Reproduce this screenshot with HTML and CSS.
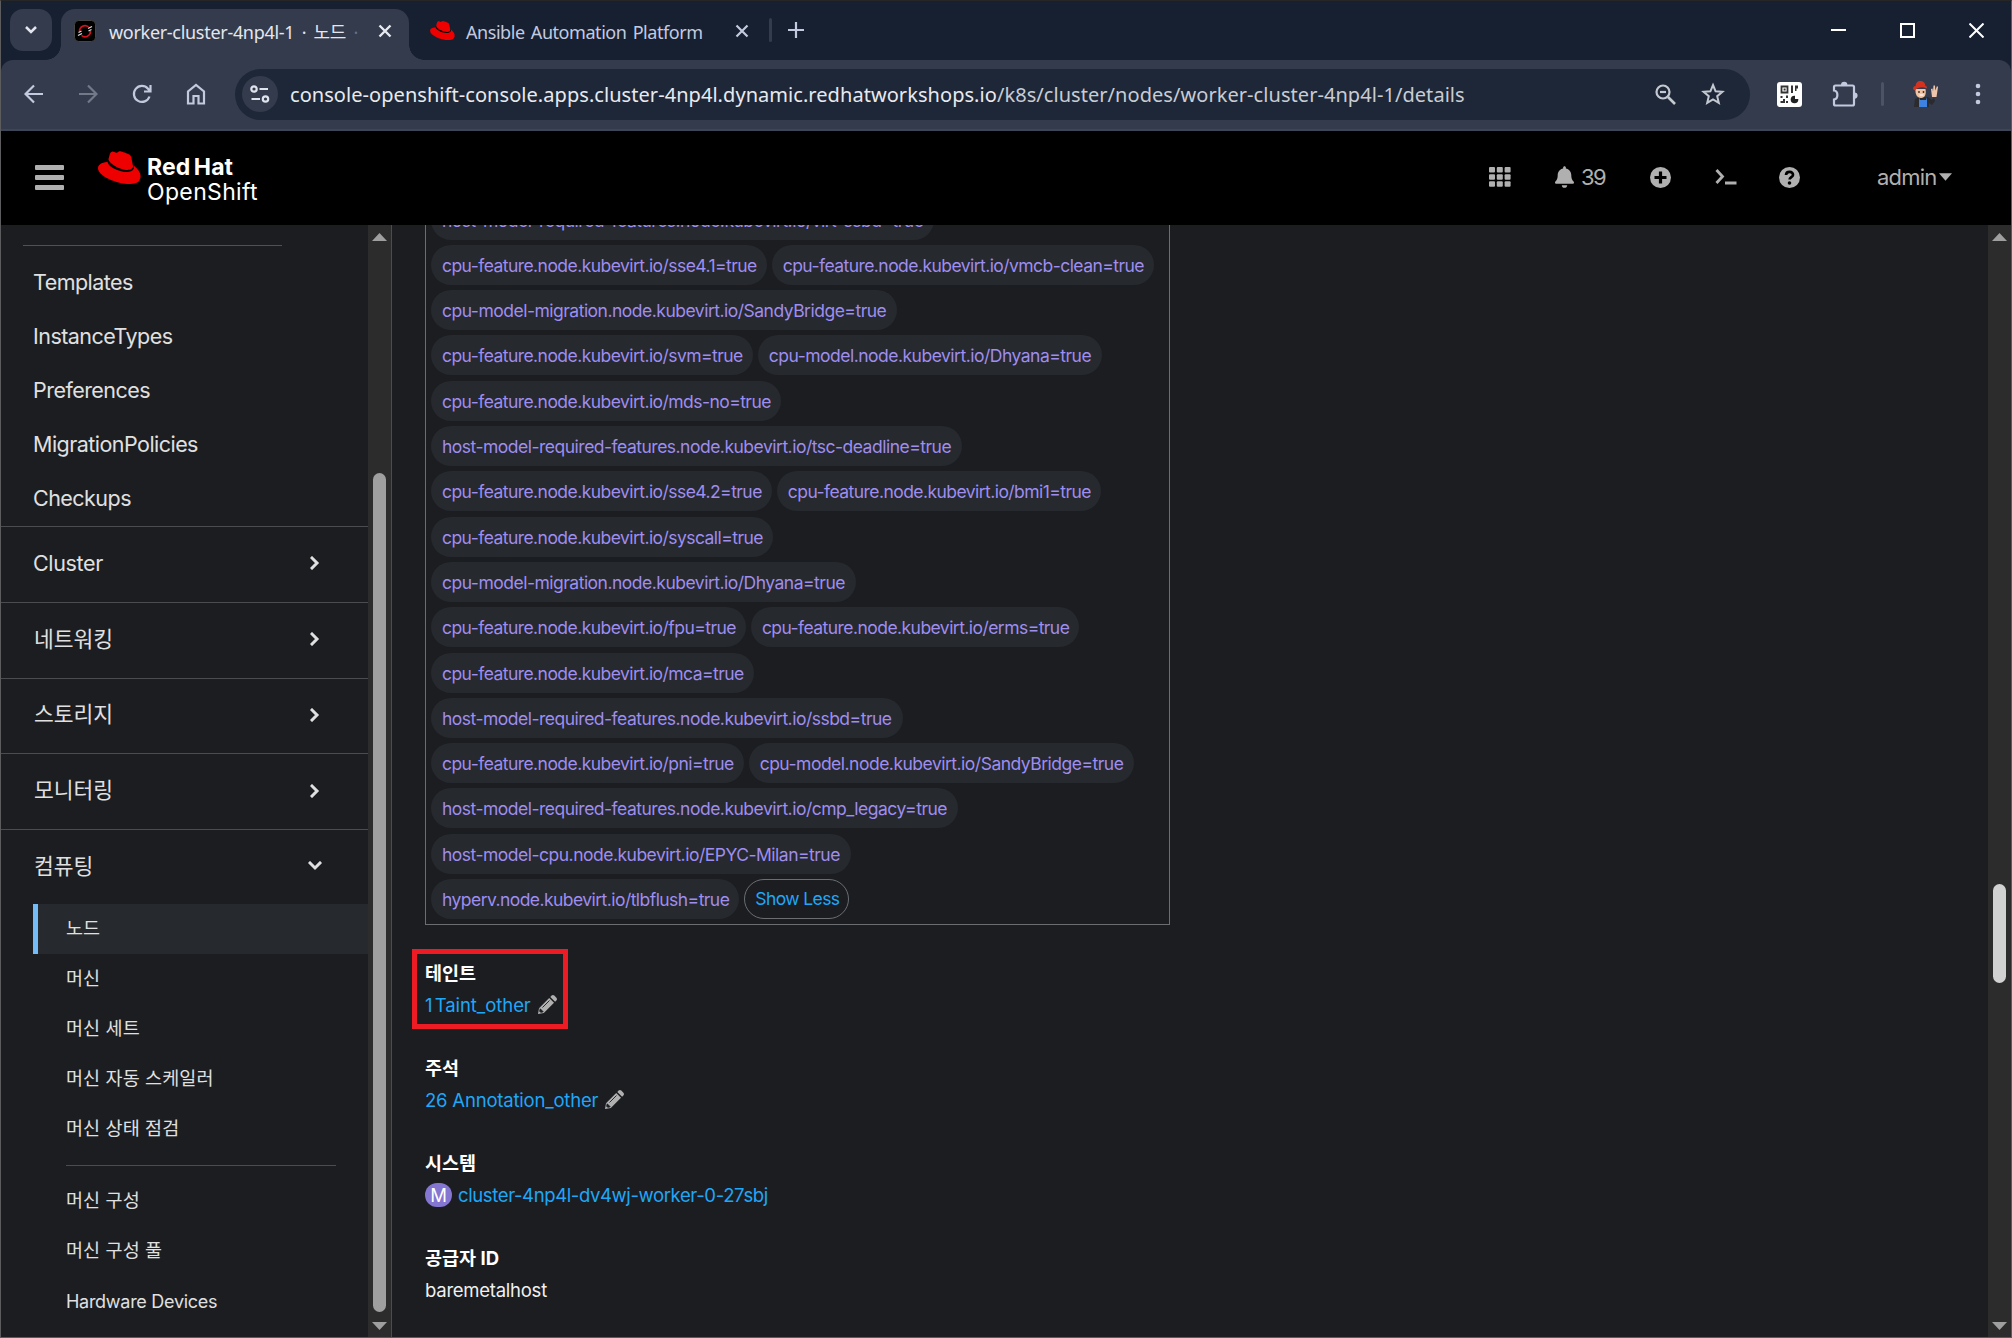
FILE: index.html
```html
<!DOCTYPE html>
<html lang="ko">
<head>
<meta charset="utf-8">
<title>worker-cluster-4np4l-1 · 노드</title>
<link rel="stylesheet" href="styles.css">
</head>
<body>
<svg class="defs" width="0" height="0" aria-hidden="true">
  <symbol id="hat" viewBox="0 0 43 33">
    <path fill="#e00" d="M28.3 18.6c2.8 0 6.8-.6 6.8-3.9 0-.3 0-.5-.1-.8L33.300 5.500c-.4-1.600-.7-2.300-3.500-3.700C27.600.7 23-.8 21.600-.8c-1.300 0-1.600 1.600-3.100 1.600-1.500 0-2.500-1.200-3.900-1.200-1.300 0-2.100.9-2.800 2.700l-2.200 8c0 3 10.500 8.300 18.700 8.300z" transform="translate(0 1)"/>
    <path fill="#e00" d="M35.600 14.500c.3 1.400.3 1.500.3 1.700 0 2.400-2.700 3.700-6.200 3.700-8 0-15-4.700-15-7.800 0-.4.100-.9.300-1.200l-4.300.1C6 11.200 0 12.300 0 17.200 0 25 18.600 33 32 33c7.600 0 10.600-3.600 10.600-8 0-3.600-3-7.500-7-10.500z"/>
    <path fill="#000" d="M35.600 14.500c.3 1.400.3 1.500.3 1.700 0 2.900-2.700 4.700-6.800 4.700-9.400 0-19.500-5.900-19.500-9.900 0-.7.200-1.500.6-2.200l.5-1.300c-.1.400-.2.700-.2 1 0 3 10.600 10.500 19 10.500 3.400 0 5.600-1.500 5.600-3.900z"/>
  </symbol>
  <symbol id="right" viewBox="0 0 10 14"><path d="M2 2l5 5-5 5" fill="none" stroke="#e0e0e0" stroke-width="3" stroke-linecap="square"/></symbol>
  <symbol id="pencil" viewBox="0 0 19 19">
    <path fill="#b0b0b0" d="M0 19l1-5.800L11.200 3l4.800 4.800L5.800 18zM12.300 1.900L13.600.6c.8-.8 1.900-.8 2.700 0l2.100 2.100c.8.8.8 1.900 0 2.700l-1.300 1.300z"/>
    <path d="M2.200 13.800L5.200 16.800l-2.500.5-1-1zM4.500 12.500l7-7" fill="#1b1d21" stroke="#1b1d21" stroke-width=".9"/>
  </symbol>
</svg>

<div class="window">
  <div class="tabstrip">
    <div class="tabsearch"><svg width="14" height="10" viewBox="0 0 14 10"><path d="M2 2l5 5 5-5" fill="none" stroke="#e3e6ee" stroke-width="2.500"/></svg></div>
    <div class="tab active">
      <svg class="favicon" width="22" height="22" viewBox="0 0 22 22"><rect x=".5" y=".5" width="21" height="21" rx="4" fill="#000" stroke="#454545"/><path d="M5.500 11.500a5.500 5.500 0 0 1 9-4.500M16.500 11a5.500 5.500 0 0 1-9 4.500" fill="none" stroke="#d3131b" stroke-width="1.600"/><path d="M14 8.500l4-2M4 15.500l4-2M14.500 11l3-1.500M4.500 12.500l3-1.500" stroke="#ddd" stroke-width="1.300"/></svg>
      <span class="tabtitle">worker-cluster-4np4l-1 · 노드 <i>·</i></span>
      <svg class="close" width="14" height="14" viewBox="0 0 14 14"><path d="M1.500 1.500l11 11M12.500 1.500l-11 11" stroke="#e8eaf0" stroke-width="2.400"/></svg>
    </div>
    <div class="tab">
      <svg class="favicon hat" width="25" height="19"><use href="#hat"/></svg>
      <span class="tabtitle second">Ansible Automation Platform</span>
      <svg class="close" width="14" height="14" viewBox="0 0 14 14"><path d="M1.500 1.500l11 11M12.500 1.500l-11 11" stroke="#c3cae0" stroke-width="2.200"/></svg>
    </div>
    <div class="tabsep"></div>
    <svg class="newtab" width="16" height="16" viewBox="0 0 16 16"><path d="M8 0v16M0 8h16" stroke="#c3cae0" stroke-width="2.200"/></svg>
    <div class="winbtns">
      <svg width="15" height="15" viewBox="0 0 15 15"><path d="M0 7h15" stroke="#fff" stroke-width="2"/></svg>
      <svg width="15" height="15" viewBox="0 0 15 15"><path d="M1 1h13v13H1z" fill="none" stroke="#fff" stroke-width="2"/></svg>
      <svg width="15" height="15" viewBox="0 0 15 15"><path d="M.5.5l14 14M14.500.5l-14 14" stroke="#fff" stroke-width="2"/></svg>
    </div>
  </div>

  <div class="toolbar">
    <div class="navbtns">
      <svg width="20" height="20" viewBox="0 0 20 20"><path d="M19 10H2M10 1.500L1.500 10l8.500 8.500" fill="none" stroke="#c3cae0" stroke-width="2.200"/></svg>
      <svg width="20" height="20" viewBox="0 0 20 20"><path d="M1 10h17M10 1.500l8.500 8.500-8.500 8.500" fill="none" stroke="#727988" stroke-width="2.200"/></svg>
      <svg width="20" height="20" viewBox="0 0 20 20"><path d="M17.500 12.500A8 8 0 1 1 16 4.700L18 7M18.500 1v6.500H12" fill="none" stroke="#c3cae0" stroke-width="2.200"/></svg>
      <svg width="20" height="22" viewBox="0 0 20 22"><path d="M2 20.500V8.500l8-6.500 8 6.500v12h-5.500V13h-5v7.500z" fill="none" stroke="#c3cae0" stroke-width="2.200"/></svg>
    </div>
    <div class="omnibox">
      <div class="siteinfo"><svg width="20" height="20" viewBox="0 0 20 20" fill="none" stroke="#dfe3ec" stroke-width="2.200"><circle cx="4" cy="5" r="2.700"/><path d="M9.500 5H18M1.500 15H10"/><circle cx="15.500" cy="15" r="2.700"/></svg></div>
      <span class="url">console-openshift-console.apps.cluster-4np4l.dynamic.redhatworkshops.io<span class="path">/k8s/cluster/nodes/worker-cluster-4np4l-1/details</span></span>
      <svg class="mag" width="21" height="21" viewBox="0 0 21 21" fill="none" stroke="#c4c8d0" stroke-width="2.200"><circle cx="8" cy="8" r="6.500"/><path d="M5 8h6"/><path d="M13 13l7 7" stroke-width="2.600"/></svg>
      <svg class="star" width="24" height="24" viewBox="0 0 24 24"><path d="M12 3l2.600 6.300 6.800.5-5.200 4.400 1.600 6.600-5.800-3.500-5.800 3.500 1.600-6.600-5.200-4.400 6.800-.5z" fill="none" stroke="#c4c8d0" stroke-width="2"/></svg>
    </div>
    <svg class="qr" width="25" height="25" viewBox="0 0 25 25"><rect width="25" height="25" rx="3" fill="#fff"/><path d="M4.500 4.500h6v6h-6z" fill="none" stroke="#333" stroke-width="1.800"/><path d="M6.600 6.600h2v2h-2zM14 3.500h2V11h-2zM18 3.500h3v3h-1.500V9H18zM3.500 14h2v2h-2zM6 17h2v4H3.500v-2H6zM9 13.500h2V16H9zM9 19h2v2H9z" fill="#333"/><circle cx="17.500" cy="17.500" r="3.800" fill="#222"/><path d="M18 13v4h4v-4z" fill="#fff"/></svg>
    <svg class="puzzle" width="26" height="26" viewBox="0 0 26 26"><path d="M3.500 4.500h17A1.500 1.500 0 0 1 22 6v17a1.500 1.500 0 0 1-1.500 1.500h-17A1.500 1.500 0 0 1 2 23v-4.500c4.500-.6 4.500-8.400 0-9V6a1.500 1.500 0 0 1 1.500-1.500z" fill="none" stroke="#c3cae0" stroke-width="2.200"/><path d="M9 4a3.200 3.200 0 0 1 6.400 0zM22.500 11.500a3 3 0 0 1 0 6.200z" fill="#c3cae0"/></svg>
    <div class="barsep"></div>
    <svg class="avatar" width="26" height="28" viewBox="0 0 26 28"><path d="M1 27l1-8 5-2 8 0 4 3 2-2 1 3-3 4-3-2v4z" fill="#2b2b2e"/><path d="M6 17l1 3h6l1-3v10H6z" fill="#3d82e0"/><path d="M2.500 9h10c1 5-.5 9-4.500 9s-6-4-5.500-9z" fill="#f0c3a2"/><path d="M19 17l-1-8 1.500-.5.5 3 .5-6 1.500 0 .3 5L24 6l1 1-1.500 10z" fill="#efc6ab"/><path d="M0 9c0-2 1-3 2.500-3C3 2 5 .5 8 1c3 .3 4 2 4.500 5 1.500 0 2 1.500 1 2.500C10 6.500 5 7 1.500 10.500z" fill="#d5311f"/><circle cx="6" cy="12" r=".9" fill="#3a2a22"/><circle cx="10.500" cy="12" r=".9" fill="#3a2a22"/><path d="M6.500 15h4" stroke="#fff" stroke-width="1.200"/></svg>
    <svg class="dots" width="6" height="22" viewBox="0 0 6 22" fill="#c3cae0"><circle cx="3" cy="3" r="2.300"/><circle cx="3" cy="11" r="2.300"/><circle cx="3" cy="19" r="2.300"/></svg>
  </div>

  <header class="masthead">
    <div class="burger"><b></b><b></b><b></b></div>
    <div class="brand">
      <svg class="logohat" width="43" height="33"><use href="#hat"/></svg>
      <div class="brandtext"><strong>Red Hat</strong><span>OpenShift</span></div>
    </div>
    <div class="tools">
      <svg class="apps" width="22" height="20" viewBox="0 0 22 20" fill="#b0b0b0"><rect width="6" height="5.500" rx="1"/><rect x="7.800" width="6" height="5.500" rx="1"/><rect x="15.600" width="6" height="5.500" rx="1"/><rect y="7.200" width="6" height="5.500" rx="1"/><rect x="7.800" y="7.200" width="6" height="5.500" rx="1"/><rect x="15.600" y="7.200" width="6" height="5.500" rx="1"/><rect y="14.300" width="6" height="5.500" rx="1"/><rect x="7.800" y="14.300" width="6" height="5.500" rx="1"/><rect x="15.600" y="14.300" width="6" height="5.500" rx="1"/></svg>
      <svg class="bell" width="19" height="22" viewBox="0 0 448 512"><path fill="#b0b0b0" d="M224 512c35.320 0 63.970-28.650 63.970-64H160.030c0 35.350 28.650 64 63.970 64zm215.390-149.710c-19.320-20.760-55.470-51.990-55.470-154.290 0-77.700-54.480-139.900-127.940-155.160V32c0-17.670-14.320-32-31.980-32s-31.980 14.330-31.980 32v20.840C118.560 68.100 64.080 130.300 64.080 208c0 102.300-36.150 133.530-55.470 154.290-6 6.450-8.660 14.160-8.610 21.710.11 16.400 12.980 32 32.100 32h383.800c19.120 0 32-15.600 32.100-32 .05-7.550-2.610-15.270-8.610-21.710z"/></svg>
      <span class="count">39</span>
      <svg class="plus" width="21" height="21" viewBox="0 0 21 21"><circle cx="10.500" cy="10.500" r="10.500" fill="#b0b0b0"/><path d="M10.500 4.500v12M4.500 10.500h12" stroke="#000" stroke-width="3.200"/></svg>
      <svg class="term" width="22" height="16" viewBox="0 0 22 16"><path d="M1.500 1l6 6.500-6 6.500M10 14h11.500" fill="none" stroke="#b0b0b0" stroke-width="2.800"/></svg>
      <svg class="help" width="21" height="21" viewBox="0 0 21 21"><circle cx="10.500" cy="10.500" r="10.500" fill="#b0b0b0"/><path d="M7 8c.3-4.500 7.300-4 7 0-.2 2.300-3.400 2.200-3.400 4.600" fill="none" stroke="#000" stroke-width="2.700"/><circle cx="10.500" cy="16" r="1.800" fill="#000"/></svg>
      <span class="user">admin</span>
      <svg class="caret" width="13" height="8" viewBox="0 0 12 7"><path d="M0 0h12L6 7z" fill="#b0b0b0"/></svg>
    </div>
  </header>

  <div class="app">
    <nav class="sidebar">
      <hr class="rule">
      <ul class="toplist"><li>Templates</li><li>InstanceTypes</li><li>Preferences</li><li>MigrationPolicies</li><li>Checkups</li></ul>
      <div class="section latin"><span>Cluster</span><svg width="10" height="14"><use href="#right"/></svg></div>
      <div class="section"><span>네트워킹</span><svg width="10" height="14"><use href="#right"/></svg></div>
      <div class="section"><span>스토리지</span><svg width="10" height="14"><use href="#right"/></svg></div>
      <div class="section"><span>모니터링</span><svg width="10" height="14"><use href="#right"/></svg></div>
      <div class="section open"><span>컴퓨팅</span><svg class="down" width="10" height="14"><use href="#right"/></svg></div>
      <ul class="sublist">
        <li class="current">노드</li><li>머신</li><li>머신 세트</li><li>머신 자동 스케일러</li><li>머신 상태 점검</li>
      </ul>
      <hr class="subrule">
      <ul class="sublist"><li>머신 구성</li><li>머신 구성 풀</li><li class="latin">Hardware Devices</li></ul>
    </nav>
    <div class="scrollbar side"><i class="up"></i><b></b><i class="dn"></i></div>
    <main class="content">
      <div class="labels">
        <div class="row"><span>host-model-required-features.node.kubevirt.io/virt-ssbd=true</span></div>
        <div class="row"><span class="feature">cpu-feature.node.kubevirt.io/sse4.1=true</span><span class="feature">cpu-feature.node.kubevirt.io/vmcb-clean=true</span></div>
        <div class="row"><span>cpu-model-migration.node.kubevirt.io/SandyBridge=true</span></div>
        <div class="row"><span class="feature">cpu-feature.node.kubevirt.io/svm=true</span><span>cpu-model.node.kubevirt.io/Dhyana=true</span></div>
        <div class="row"><span class="feature">cpu-feature.node.kubevirt.io/mds-no=true</span></div>
        <div class="row"><span>host-model-required-features.node.kubevirt.io/tsc-deadline=true</span></div>
        <div class="row"><span class="feature">cpu-feature.node.kubevirt.io/sse4.2=true</span><span class="feature">cpu-feature.node.kubevirt.io/bmi1=true</span></div>
        <div class="row"><span class="feature">cpu-feature.node.kubevirt.io/syscall=true</span></div>
        <div class="row"><span>cpu-model-migration.node.kubevirt.io/Dhyana=true</span></div>
        <div class="row"><span class="feature">cpu-feature.node.kubevirt.io/fpu=true</span><span class="feature">cpu-feature.node.kubevirt.io/erms=true</span></div>
        <div class="row"><span class="feature">cpu-feature.node.kubevirt.io/mca=true</span></div>
        <div class="row"><span>host-model-required-features.node.kubevirt.io/ssbd=true</span></div>
        <div class="row"><span class="feature">cpu-feature.node.kubevirt.io/pni=true</span><span>cpu-model.node.kubevirt.io/SandyBridge=true</span></div>
        <div class="row"><span>host-model-required-features.node.kubevirt.io/cmp_legacy=true</span></div>
        <div class="row"><span>host-model-cpu.node.kubevirt.io/EPYC-Milan=true</span></div>
        <div class="row"><span class="feature">hyperv.node.kubevirt.io/tlbflush=true</span><button class="less">Show Less</button></div>
      </div>
      <dl class="details">
        <div class="item marked"><dt>테인트</dt><dd><a class="taint">1 Taint_other</a><svg width="19" height="19"><use href="#pencil"/></svg></dd></div>
        <div class="item"><dt>주석</dt><dd><a>26 Annotation_other</a><svg width="19" height="19"><use href="#pencil"/></svg></dd></div>
        <div class="item"><dt>시스템</dt><dd><span class="badge">M</span><a class="machine">cluster-4np4l-dv4wj-worker-0-27sbj</a></dd></div>
        <div class="item"><dt>공급자 ID</dt><dd><span class="host">baremetalhost</span></dd></div>
      </dl>
    </main>
    <div class="scrollbar page"><i class="up"></i><b></b><i class="dn"></i></div>
  </div>
</div>
</body>
</html>
```
FILE: styles.css
```css
*, *::before, *::after { box-sizing: border-box; }
body { margin: 0; background: #1b1d21; }
svg { display: block; flex: none; }
ul, dl, dd { margin: 0; padding: 0; list-style: none; }
.defs { position: absolute; }

.window {
  width: 2012px; height: 1338px; overflow: hidden;
  display: flex; flex-direction: column;
  border: 1px solid #5c5c5e; border-top-color: #262626;
  background: #1b1d21;
  font-family: Inter, "Noto Sans CJK KR", sans-serif;
  white-space: nowrap;
}

/* Browser tabs */
.tabstrip {
  height: 59px; flex: none; display: flex; align-items: flex-start;
  background: #172030; font-family: "Noto Sans", "Noto Sans CJK KR", sans-serif;
}
.tabsearch {
  width: 42px; height: 42px; margin: 8px 9px 0; border-radius: 13px;
  background: #333b4c; display: flex; align-items: center; justify-content: center;
}
.tab { height: 51px; margin-top: 8px; display: flex; align-items: center; padding: 0 0 8px 21px; }
.tab.active { position: relative; width: 348px; padding-left: 13px; background: #333b4c; border-radius: 14px 14px 0 0; }
.tab.active::before, .tab.active::after {
  content: ""; position: absolute; bottom: 0; width: 15px; height: 15px;
}
.tab.active::before { left: -15px; background: radial-gradient(circle at 0 0, transparent 14.500px, #333b4c 15px); }
.tab.active::after { right: -15px; background: radial-gradient(circle at 100% 0, transparent 14.500px, #333b4c 15px); }
.tabtitle { flex: none; width: 263px; margin-left: 13px; padding-top: 3px; font-size: 18px; line-height: 24px; letter-spacing: -.3px; word-spacing: 3px; color: #e3e6ee; }
.tabtitle i { color: #6a7180; font-style: normal; }
.tabtitle.second { width: 265px; margin-left: 11px; margin-right: 4px; color: #c3cae0; letter-spacing: -.45px; word-spacing: 2px; }
.active .close { margin-left: 6px; }
.tabsep { width: 3px; height: 24px; margin: 17px 0 0 20px; border-radius: 2px; background: #333b4c; }
.newtab { margin: 21px 0 0 16px; }
.winbtns { margin-left: auto; padding: 22px 27px 0 0; display: flex; gap: 54px; }

/* Address bar */
.toolbar {
  height: 71px; flex: none; display: flex; align-items: center;
  padding: 0 0 1px; background: #333b4c; border-bottom: 2px solid #3e4655; border-radius: 12px 12px 0 0;
  box-shadow: 0 -12px 0 0 #172030;
}
.tabstrip { position: relative; }
.navbtns { display: flex; align-items: center; gap: 34px; padding-left: 23px; }
.omnibox {
  width: 1515px; height: 51px; margin-left: 29px; border-radius: 26px; padding: 0 24px 0 7px;
  display: flex; align-items: center; background: #1e2737;
}
.siteinfo { width: 36px; height: 36px; border-radius: 50%; background: #333b4c; display: flex; align-items: center; justify-content: center; }
.url { width: 1365px; margin-left: 12px; padding-top: 1px; font: 20px/30px "Noto Sans", sans-serif; letter-spacing: .055px; color: #e8eaf0; }
.path { color: #c9ccd3; }
.mag { margin-right: 25px; }
.qr { margin-left: 27px; }
.puzzle { margin-left: 30px; }
.barsep { width: 3px; height: 24px; margin-left: 23px; border-radius: 2px; background: #4b5364; }
.avatar { margin-left: 29px; }
.dots { margin-left: 36px; }

/* Console masthead */
.masthead { height: 94px; flex: none; display: flex; align-items: center; padding-bottom: 2px; background: #000; }
.burger { width: 29px; margin-left: 34px; display: grid; gap: 5px; }
.burger b { height: 5px; border-radius: 1px; background: #b0b0b0; }
.brand { display: flex; margin-left: 34px; }
.logohat { margin-top: 1px; }
.brandtext { margin-left: 6px; padding-top: 5px; display: flex; flex-direction: column; color: #fff; font-size: 23px; line-height: 25px; }
.brandtext strong { font-weight: 700; letter-spacing: .1px; word-spacing: -2px; }
.brandtext span { letter-spacing: .35px; }
.tools { margin-left: auto; padding-right: 59px; display: flex; align-items: center; color: #b0b0b0; font-size: 22px; }
.bell { margin-left: 44px; }
.count { width: 24px; margin-left: 7px; margin-right: 1px; letter-spacing: -1.500px; }
.plus { margin-left: 44px; }
.term { margin-left: 44px; }
.help { margin-left: 42px; }
.user { width: 58px; margin-left: 77px; letter-spacing: -.8px; }
.caret { margin-left: 4px; }

/* Navigation */
.app { height: 1112px; display: flex; flex: none; }
.sidebar { width: 367px; flex: none; color: #e0e0e0; font-size: 21.500px; }
.rule { height: 1px; margin: 20px 86px 9px 22px; border: 0; background: #4f5255; }
.toplist li { height: 54px; padding-left: 32px; line-height: 54px; letter-spacing: -.54px; }
.toplist { height: 271px; }
.section {
  height: 75.750px; border-top: 1px solid #4a4c50; padding: 0 48px 2px 33px;
  display: flex; align-items: center; justify-content: space-between; font-size: 21.500px;
}
.section span { padding-bottom: 4px; }
.section.latin { padding-left: 32px; letter-spacing: -.35px; }
.section.latin span { padding-bottom: 0; }
.section.open { height: 75px; }
.down { transform: rotate(90deg); }
.sublist { font-size: 18.500px; letter-spacing: .1px; }
.sublist li { height: 50px; padding-left: 65px; line-height: 49px; }
.sublist .latin { font-size: 18px; letter-spacing: -.28px; line-height: 51px; }
.sublist .current { margin-left: 32px; padding-left: 28px; border-left: 5px solid #73bcf7; background: #26292d; }
.subrule { height: 1px; margin: 11px 32px 10px 65px; border: 0; background: #4a4c50; }

/* Scrollbars */
.scrollbar { flex: none; display: flex; flex-direction: column; align-items: center; background: #2c2c2c; }
.scrollbar i { width: 15px; height: 8px; flex: none; background: #9f9f9f; }
.scrollbar b { width: 13px; flex: none; border-radius: 7px; background: #9f9f9f; }
.up { margin-top: 8px; clip-path: polygon(50% 0, 100% 100%, 0 100%); }
.dn { margin: auto 0 7px; clip-path: polygon(0 0, 100% 0, 50% 100%); }
.side { width: 24px; border-right: 1px solid #4a4c50; }
.side b { height: 839px; margin-top: 232px; }
.page { width: 23px; }
.page b { height: 99px; margin-top: 643px; background: #d2d2d2; }

/* Node details */
.content { flex: 1; padding-left: 33px; overflow: hidden; }
.labels {
  width: 745px; height: 700px; border: 1px solid #6a6e73; border-top: 0; padding: 0 5px 5px;
  display: flex; flex-direction: column; justify-content: flex-end; gap: 5.300px;
}
.row { display: flex; gap: 5px; flex: none; height: 40px; }
.row span, .less { height: 40px; padding: 0 11px; border-radius: 20px; background: #26292d; color: #9f8df0; font-size: 17.500px; line-height: 41px; letter-spacing: -.5px; }
.row .feature { padding-right: 10px; letter-spacing: -.55px; }
.less { border: 1px solid #6a6e73; background: none; color: #1fa7f8; line-height: 38px; padding: 0 9px 0 10px; font-family: inherit; letter-spacing: -.6px; }
.details { padding-top: 24px; }
.item { position: relative; height: 95px; font-size: 18.500px; }
.item dt { height: 33px; line-height: 48px; color: #fff; font-weight: 700; }
.item dd { height: 45px; display: flex; align-items: center; }
.item a { color: #1fa7f8; letter-spacing: -.2px; }
.item .taint { letter-spacing: -.05px; word-spacing: -3px; }
.item .machine { letter-spacing: -.38px; }
.item svg { margin-left: 7px; }
.marked::after { content: ""; position: absolute; left: -13px; top: 0; width: 156px; height: 80px; border: 5px solid #ed1c24; }
.badge { width: 27px; height: 24px; margin-right: 6px; border-radius: 12px; background: #8476d1; color: #fff; line-height: 24px; text-align: center; }
.host { color: #f0f0f0; letter-spacing: -.25px; }
```
